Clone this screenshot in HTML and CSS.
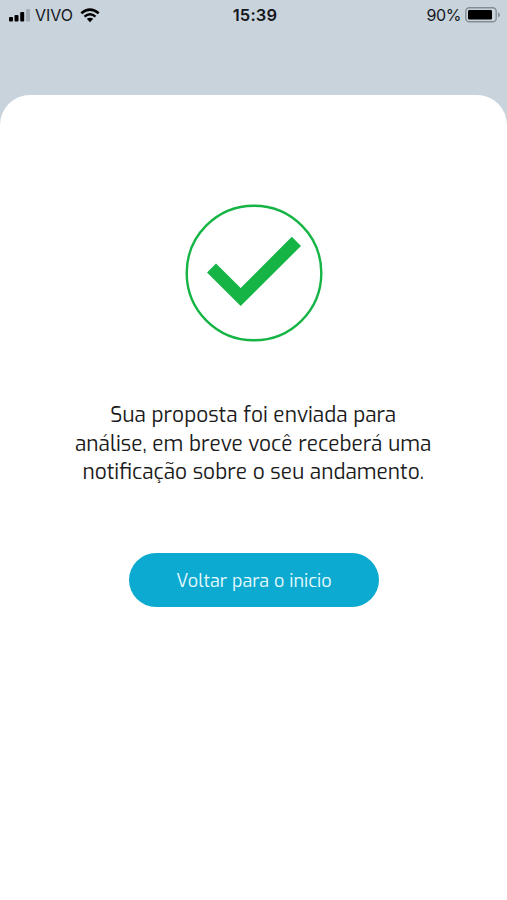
FILE: index.html
```html
<!DOCTYPE html>
<html lang="pt-BR">
  <head>
    <meta charset="UTF-8">
    <meta name="viewport" content="width=device-width, initial-scale=1.0">
    <title>Proposta enviada</title>
    <link rel="stylesheet" href="styles.css">
  </head>
  <body>
    <div class="status-bar">
      <div class="carrier">
        <svg class="signal" width="22" height="13" viewBox="0 0 22 13">
          <rect x="0" y="8" width="4" height="4.5" rx="1"/>
          <rect x="5.5" y="6" width="4" height="6.5" rx="1"/>
          <rect x="11.2" y="3" width="4" height="9.5" rx="1"/>
          <rect class="signal-off" x="17" y="0" width="4" height="12.5" rx="1"/>
        </svg>
        <span class="carrier-name">VIVO</span>
        <svg class="wifi" width="20" height="15" viewBox="0 0 20 15">
          <path d="M1.3 5.2 Q10 -2 18.7 5.2"/>
          <path d="M4.5 8.6 Q10 4 15.5 8.6"/>
          <path class="wifi-dot" d="M6.8 10.8 Q10 8.6 13.2 10.8 L10 14.2 Z"/>
        </svg>
      </div>
      <div class="clock">15:39</div>
      <div class="power">
        <span class="percent">90%</span>
        <svg class="battery" width="36" height="16" viewBox="0 0 36 16">
          <rect class="battery-case" x="0.8" y="0.8" width="30.4" height="14" rx="3.6"/>
          <rect x="3" y="3" width="24" height="9.6" rx="1.4"/>
          <path class="battery-tip" d="M33 5.5 Q35 6.3 35 7.9 Q35 9.5 33 10.3 Z"/>
        </svg>
      </div>
    </div>

    <main class="card">
      <svg class="check" width="138" height="138" viewBox="0 0 138 138">
        <circle cx="69" cy="69" r="67.3"/>
        <path d="M22 68.6 L31 59.6 L55.7 84 L106.8 32.8 L116 42 L55.7 102 Z"/>
      </svg>
      <p class="message">
        <span class="line">Sua proposta foi enviada para</span>
        <span class="line">análise, em breve você receberá uma</span>
        <span class="line">notificação sobre o seu andamento.</span>
      </p>
      <button class="home-button"><span class="label">Voltar para o inicio</span></button>
    </main>
  </body>
</html>
```

FILE: styles.css
```css
body {
  margin: 0;
  min-height: 900px;
  display: flex;
  flex-direction: column;
  background-color: #c9d3dc;
  font-family: "Exo", "Exo 2", Roboto, sans-serif;
}

/* Status bar */
.status-bar {
  display: grid;
  grid-template-columns: 1fr auto 1fr;
  align-items: center;
  box-sizing: border-box;
  height: 30px;
  margin-bottom: 65px;
  padding: 0 6px 0 9px;
  color: #14181c;
  font-family: Inter, sans-serif;
  font-size: 16px;
}

.carrier,
.power {
  display: flex;
  align-items: center;
}

.power {
  justify-content: flex-end;
}

.carrier-name {
  margin-left: 4px;
}

.wifi {
  margin-left: 7px;
  fill: none;
  stroke: #000;
  stroke-width: 2.5;
}

.wifi-dot {
  fill: #000;
  stroke: none;
}

.signal-off {
  fill: #a3abb2;
}

.clock {
  font-weight: 600;
  font-size: 16.5px;
  letter-spacing: 0.2px;
}

.percent {
  letter-spacing: -0.4px;
}

.battery {
  margin-left: 4px;
}

.battery-case {
  fill: none;
  stroke: #858d92;
  stroke-width: 1.4;
}

.battery-tip {
  fill: #858d92;
}

/* Card */
.card {
  flex: 1;
  display: flex;
  flex-direction: column;
  align-items: center;
  padding-top: 109px;
  background-color: #fff;
  border-radius: 30px 30px 0 0;
}

.check circle {
  fill: none;
  stroke: #15b445;
  stroke-width: 2.4;
}

.check path {
  fill: #15b445;
}

.message {
  margin: 59px 0 66px;
  color: #1c1c1c;
  font-size: 22px;
  line-height: 28.5px;
  text-align: center;
  transform: scaleX(0.947);
}

.line {
  display: block;
}

.home-button {
  width: 250px;
  height: 54px;
  padding: 2px 0 0;
  border: 0;
  border-radius: 27px;
  background-color: #0ca9d0;
  color: #e6f9fd;
  font-family: inherit;
  font-size: 19px;
}

.label {
  display: inline-block;
  transform: scaleX(0.947);
}
```
